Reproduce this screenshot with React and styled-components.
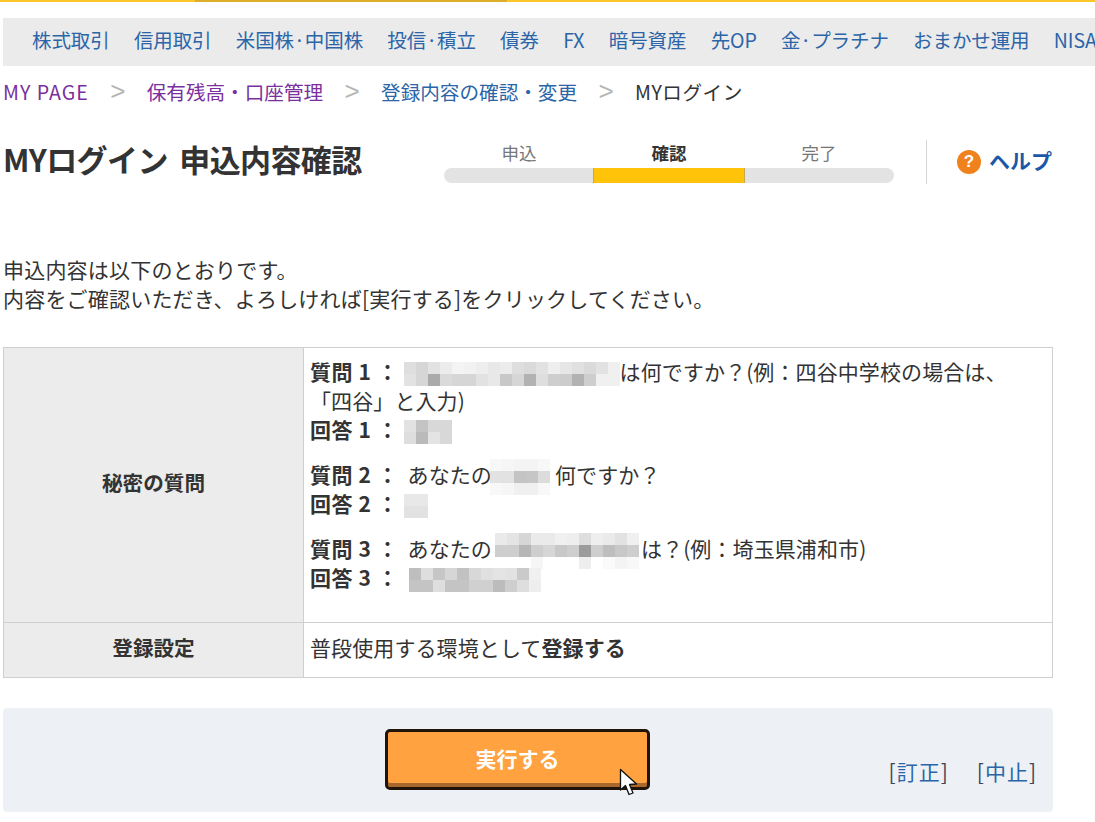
import React from "react";
import styled, { createGlobalStyle } from "styled-components";

const Global = createGlobalStyle`
  html, body { margin: 0; padding: 0; background: #fff; }
  body { font-family: "Noto Sans CJK JP", "Noto Sans", sans-serif; color: #333; overflow: hidden; }
`;
const Page = styled.div`width: 1095px; height: 822px; overflow: hidden; position: relative;`;
const TopBar = styled.div`height: 2px; display: flex; background: #fcc62a;`;
const TopSegment = styled.div`width: 312px; margin-left: 195px; background: #dcae2a;`;
const Nav = styled.nav`
  margin: 16px 0 0 3px; height: 48px; box-sizing: border-box; background: #ebebeb; display: flex; align-items: center;
  gap: 24.3px; padding: 0 0 5px 29px; white-space: nowrap; overflow: hidden;
`;
const NavLink = styled.a`font-size: 19.5px; color: #2b65a8; letter-spacing: -0.1px;`;
const Crumbs = styled.div`
  height: 52px; box-sizing: border-box; padding: 0 0 2px 3px; display: flex; align-items: center; font-size: 19.6px; white-space: nowrap;
`;
const Crumb = styled.a`color: ${p => p.$color}; letter-spacing: ${p => p.$ls || 0}px;`;
const Sep = styled.span`color: #b5b5b5; width: 58px; text-align: center; font-size: 26px; font-weight: 400; line-height: 30px; font-family: "Liberation Sans", sans-serif;`;
const Header = styled.div`margin: 22px 0 0 3px; height: 44px; display: flex; align-items: center;`;
const Title = styled.h1`margin: 0; width: 441px; box-sizing: border-box; padding-bottom: 6px; font-size: 31px; font-weight: 700; line-height: 40px; white-space: nowrap; letter-spacing: -0.6px; word-spacing: 5px;`;
const Stepper = styled.div`width: 450px; align-self: flex-start;`;
const StepLabels = styled.div`display: flex; height: 25px; margin-bottom: 3px;`;
const StepLabel = styled.div`
  flex: 1; text-align: center; font-size: 17.5px; line-height: 25px;
  font-weight: ${p => (p.$on ? 700 : 400)}; color: ${p => (p.$on ? "#333" : "#777")};
`;
const Bar = styled.div`height: 15px; border-radius: 8px; background: #e3e3e3; display: flex; justify-content: center; overflow: hidden;`;
const BarFill = styled.div`width: 150px; background: #ffc40a; border-left: 1px solid #c5a94a; border-right: 1px solid #c5a94a;`;
const Divider = styled.div`width: 1px; height: 44px; background: #d5d5d5; margin-left: 32px;`;
const Help = styled.a`
  margin-left: 30px; display: flex; align-items: center; gap: 8px; color: #1c58a8; font-weight: 700; font-size: 21px; white-space: nowrap;
`;
const HelpText = styled.span`padding-bottom: 4px;`;
const HelpDot = styled.span`
  width: 24px; height: 24px; border-radius: 50%; background: #f0821e; color: #fff; font-size: 17px; line-height: 24px;
  text-align: center; font-weight: 700; font-family: "Liberation Sans", sans-serif;
`;
const Intro = styled.p`margin: 71px 0 34px 3px; font-size: 21px; line-height: 29px; white-space: nowrap; letter-spacing: 0.2px;`;
const Table = styled.table`
  margin-left: 3px; width: 1050px; border-collapse: collapse; table-layout: fixed; font-size: 21px; line-height: 29px;
`;
const Th = styled.th`
  width: 300px; background: #ececec; border: 1px solid #cfcfcf; font-size: 20.6px; font-weight: 700; text-align: center; padding: 0 0 6px;
  height: ${p => p.$h}px; box-sizing: border-box;
`;
const Td = styled.td`
  border: 1px solid #cfcfcf; padding: ${p => p.$pad || 0}; vertical-align: ${p => p.$va || "middle"}; box-sizing: border-box;
  height: ${p => p.$h}px; letter-spacing: 0.1px;
`;
const QA = styled.div`margin-bottom: 16px; &:last-child { margin-bottom: 0; }`;
const Key = styled.b`font-weight: 700; letter-spacing: 0.6px; margin-right: 9px;`;
const MosaicBox = styled.span`
  display: inline-grid; grid-template-columns: repeat(${p => p.$cols}, 12px); grid-auto-rows: 12px;
  vertical-align: middle; margin: -20px ${p => p.$mr || 0}px -20px ${p => p.$ml || 0}px; position: relative;
`;
const MosaicCell = styled.i`display: block; width: 12px; height: 12px;`;
const Mosaic = ({ rows, ml, mr }) => (
  <MosaicBox $cols={rows[0].length} $ml={ml} $mr={mr}>
    {rows.flat().map((g, i) => (
      <MosaicCell key={i} style={{ background: `rgb(${g},${g},${g})` }} />
    ))}
  </MosaicBox>
);
const Footer = styled.div`
  margin: 30px 0 0 3px; width: 1050px; height: 104px; box-sizing: border-box; background: #edf1f6; border-radius: 4px;
  display: flex; padding: 21px 16px 0 382px;
`;
const Submit = styled.button`
  width: 265px; height: 61px; box-sizing: border-box; border: 3px solid #1f130a; border-radius: 5px; background: #ffa23f;
  box-shadow: inset 0 -4px 0 #a8672c; color: #fff; font: 700 21px/1 "Noto Sans CJK JP", sans-serif; padding: 0 0 3px;
`;
const Links = styled.div`margin-left: auto; margin-top: 28px; display: flex; gap: 28px; font-size: 21px; line-height: 29px; letter-spacing: 1px; color: #555;`;
const LinkText = styled.a`color: #2b65a8;`;
const Bracket = styled.span`color: #445;`;
const Cursor = styled.svg`position: absolute; left: 619px; top: 768px;`;

const q1 = [
  [222,214,226,236,244,242,238,232,236,222,218,226,238,230,224,218,226,240],
  [226,214,170,218,214,214,226,232,200,214,178,222,206,204,178,206,240,240],
];
const a1 = [[226,196,216,216],[222,186,228,216]];
const q2 = [
  [248,246,244,244,248],
  [226,226,196,198,220],
  [248,246,240,240,248],
];
const a2 = [[232,232],[226,226]];
const q3 = [
  [234,228,214,234,234,240,238,222,238,234,226,240],
  [206,206,182,206,214,200,206,156,206,190,200,206],
  [255,255,255,246,255,255,255,238,255,250,244,248],
];
const a3 = [
  [190,222,198,214,194,216,224,228,226,202,240],
  [196,196,222,196,196,208,208,188,206,222,238],
];

const nav = ["株式取引","信用取引","米国株·中国株","投信·積立","債券","FX","暗号資産","先OP","金·プラチナ","おまかせ運用","NISA"];

export default function App() {
  return (
    <Page>
      <Global />
      <TopBar><TopSegment /></TopBar>
      <Nav>{nav.map(n => <NavLink key={n}>{n}</NavLink>)}</Nav>
      <Crumbs>
        <Crumb $color="#7a2f9e" $ls={1}>MY PAGE</Crumb><Sep>&gt;</Sep>
        <Crumb $color="#7a2f9e">保有残高・口座管理</Crumb><Sep>&gt;</Sep>
        <Crumb $color="#2b65a8">登録内容の確認・変更</Crumb><Sep>&gt;</Sep>
        <Crumb $color="#333" $ls={0.5}>MYログイン</Crumb>
      </Crumbs>
      <Header>
        <Title>MYログイン 申込内容確認</Title>
        <Stepper>
          <StepLabels>
            <StepLabel>申込</StepLabel>
            <StepLabel $on>確認</StepLabel>
            <StepLabel>完了</StepLabel>
          </StepLabels>
          <Bar><BarFill /></Bar>
        </Stepper>
        <Divider />
        <Help><HelpDot>?</HelpDot><HelpText>ヘルプ</HelpText></Help>
      </Header>
      <Intro>申込内容は以下のとおりです。<br />内容をご確認いただき、よろしければ[実行する]をクリックしてください。</Intro>
      <Table>
        <tbody>
          <tr>
            <Th $h={275}>秘密の質問</Th>
            <Td $h={275} $va="top" $pad="9px 7px 0 6px">
              <QA>
                <Key>質問 1 ：</Key><Mosaic rows={q1} ml={-4} />は何ですか？(例：四谷中学校の場合は、<br />
                「四谷」と入力)<br />
                <Key>回答 1 ：</Key><Mosaic rows={a1} ml={-4} />
              </QA>
              <QA>
                <Key>質問 2 ：</Key>あなたの<Mosaic rows={q2} ml={-2} mr={5} />何ですか？<br />
                <Key>回答 2 ：</Key><Mosaic rows={a2} ml={-4} />
              </QA>
              <QA>
                <Key>質問 3 ：</Key>あなたの<Mosaic rows={q3} ml={3} mr={2} />は？(例：埼玉県浦和市)<br />
                <Key>回答 3 ：</Key><Mosaic rows={a3} ml={1} />
              </QA>
            </Td>
          </tr>
          <tr>
            <Th $h={55}>登録設定</Th>
            <Td $h={55} $pad="0 6px 5px">普段使用する環境として<b>登録する</b></Td>
          </tr>
        </tbody>
      </Table>
      <Footer>
        <Submit>実行する</Submit>
        <Links>
          <span><Bracket>[</Bracket><LinkText>訂正</LinkText><Bracket>]</Bracket></span>
          <span><Bracket>[</Bracket><LinkText>中止</LinkText><Bracket>]</Bracket></span>
        </Links>
      </Footer>
      <Cursor width="20" height="30" viewBox="0 0 20 30">
        <path d="M1.5 1.5 L1.5 22 L6.5 17.5 L10 26.5 L14 25 L10.5 16.5 L17.5 16 Z" fill="#fff" stroke="#111" strokeWidth="1.3" strokeLinejoin="round" />
      </Cursor>
    </Page>
  );
}
